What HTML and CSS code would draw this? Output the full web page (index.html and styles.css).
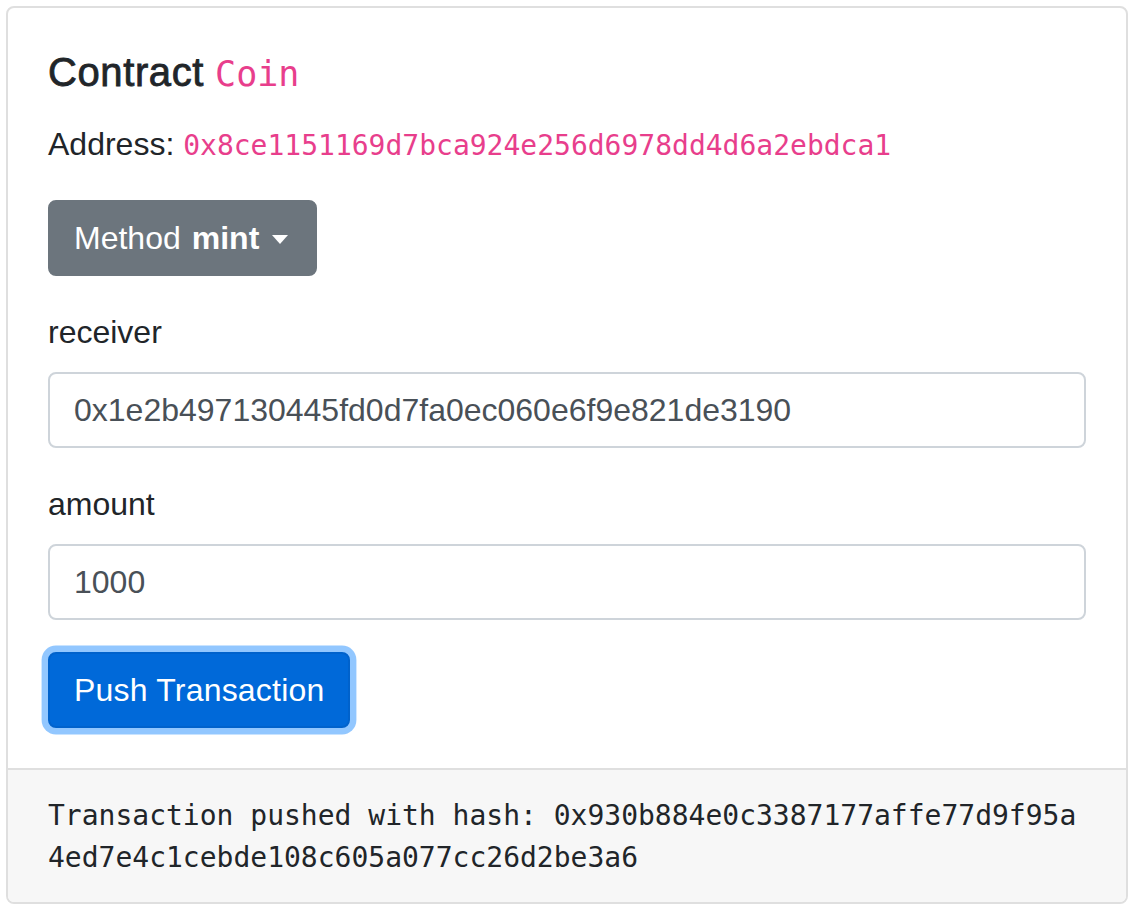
FILE: index.html
```html
<!DOCTYPE html>
<html lang="en">
<head>
<meta charset="utf-8">
<title>Contract Coin</title>
<link rel="stylesheet" href="styles.css">
</head>
<body>
<div class="card">
  <div class="card-body">
    <h5 class="card-title"><span class="title-word">Contract</span> <code>Coin</code></h5>
    <p class="address">Address: <code>0x8ce1151169d7bca924e256d6978dd4d6a2ebdca1</code></p>
    <div class="dropdown">
      <button class="btn btn-secondary dropdown-toggle" type="button">Method <strong>mint</strong></button>
    </div>
    <div class="form-group">
      <label class="label">receiver</label>
      <input class="form-control" type="text" value="0x1e2b497130445fd0d7fa0ec060e6f9e821de3190">
    </div>
    <div class="form-group">
      <label class="label">amount</label>
      <input class="form-control" type="text" value="1000">
    </div>
    <button class="btn btn-primary focus" type="button">Push Transaction</button>
  </div>
  <div class="card-footer">
    <pre class="result">Transaction pushed with hash: 0x930b884e0c3387177affe77d9f95a
4ed7e4c1cebde108c605a077cc26d2be3a6</pre>
  </div>
</div>
</body>
</html>
```

FILE: styles.css
```css
html, body {
  background: #fff;
}
body {
  margin: 6px;
  font-family: "Liberation Sans", Arial, sans-serif;
  font-size: 32px;
  line-height: 1.5;
  color: #212529;
}
code {
  font-family: "DejaVu Sans Mono", "Liberation Mono", monospace;
  font-size: 87.5%;
  color: #e83e8c;
}
.card {
  border: 2px solid #dfdfdf;
  border-radius: 8px;
  background: #fff;
  overflow: hidden;
}
.card-body {
  padding: 40px;
}
.card-title {
  margin: 0 0 24px;
  font-size: 40px;
  font-weight: 500;
  line-height: 1.2;
}
.title-word {
  letter-spacing: 0.6px;
  -webkit-text-stroke: 0.8px #212529;
}
.address {
  margin: 0 0 32px;
}
.dropdown {
  margin-bottom: 32px;
}
.btn {
  display: inline-flex;
  align-items: center;
  font-family: inherit;
  font-size: 32px;
  line-height: 48px;
  padding: 12px 24px;
  border: 2px solid transparent;
  border-radius: 8px;
  color: #fff;
  cursor: pointer;
}
.btn-secondary {
  background: #6c757d;
  border-color: #6c757d;
  padding-right: 27px;
}
.btn-secondary strong {
  font-weight: bold;
  margin-left: 11px;
}
.dropdown-toggle::after {
  content: "";
  display: inline-block;
  margin-left: 13px;
  margin-top: 2px;
  border-top: 9px solid #fff;
  border-left: 8px solid transparent;
  border-right: 8px solid transparent;
}
.btn-primary {
  background: #0069d9;
  border-color: #0062cc;
  letter-spacing: 0.2px;
}
.btn-primary.focus {
  box-shadow: 0 0 0 6.4px rgba(38, 143, 255, 0.5);
}
.form-group {
  margin-bottom: 32px;
}
.label {
  display: block;
  margin-bottom: 16px;
}
.form-control {
  display: block;
  box-sizing: border-box;
  width: 100%;
  height: 76px;
  margin: 0;
  padding: 12px 24px;
  font-family: inherit;
  font-size: 32px;
  line-height: 48px;
  color: #495057;
  background: #fff;
  border: 2px solid #ced4da;
  border-radius: 8px;
  outline: none;
}
.card-footer {
  background: #f7f7f7;
  border-top: 2px solid #dfdfdf;
  padding: 25px 40px 23px;
}
.result {
  margin: 0;
  font-family: "DejaVu Sans Mono", "Liberation Mono", monospace;
  font-size: 28px;
  line-height: 42px;
  color: #212529;
  white-space: pre;
}
```
